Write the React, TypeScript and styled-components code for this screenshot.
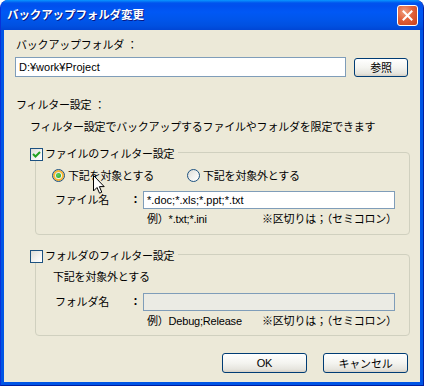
import styled, { createGlobalStyle } from 'styled-components'

const GlobalStyle = createGlobalStyle`
  html, body { margin: 0; padding: 0; background: #ffffff; }
  body {
    font-family: "Liberation Sans", "Noto Sans CJK JP", sans-serif;
    font-size: 11px;
    letter-spacing: -0.2px;
    color: #000;
  }
`

function App() {
  return (
    <>
      <GlobalStyle />
      <Window>
        <TitleBar>
          <Title>バックアップフォルダ変更</Title>
          <CloseButton>
            <svg width="11" height="11" viewBox="0 0 11 11">
              <path d="M1.5 1.5 L9.5 9.5 M9.5 1.5 L1.5 9.5" stroke="#fff" strokeWidth="2" strokeLinecap="square" />
            </svg>
          </CloseButton>
        </TitleBar>

        <Client>
          <Text $indent={12} $top={8}>バックアップフォルダ ：</Text>
          <PathRow>
            <TextBox $width={331} $height={20}>D:¥work¥Project</TextBox>
            <Button $width={54} $height={19}>参照</Button>
          </PathRow>

          <Text $indent={12} $top={21}>フィルター設定 ：</Text>
          <Text $indent={26} $top={8}>フィルター設定でバックアップするファイルやフォルダを限定できます</Text>

          <Group $top={13}>
            <GroupHeader>
              <CheckBox>
                <svg width="11" height="11" viewBox="0 0 11 11">
                  <path d="M2 5 L4.5 7.5 L9 3" stroke="#21A121" strokeWidth="2" fill="none" />
                </svg>
              </CheckBox>
              <span>ファイルのフィルター設定</span>
            </GroupHeader>
            <GroupBox $height={83} $pad={16}>
              <RadioRow>
                <RadioOption $width={135}>
                  <Radio $checked $hover />
                  <span>下記を対象とする</span>
                </RadioOption>
                <RadioOption>
                  <Radio />
                  <span>下記を対象外とする</span>
                </RadioOption>
              </RadioRow>
              <FieldRow $top={9}>
                <FieldLabel>ファイル名</FieldLabel>
                <Colon>：</Colon>
                <TextBox $width={252} $height={18}>*.doc;*.xls;*.ppt;*.txt</TextBox>
              </FieldRow>
              <HintRow>
                <HintExample>例）*.txt;*.ini</HintExample>
                <span>※区切りは；（セミコロン）</span>
              </HintRow>
            </GroupBox>
          </Group>

          <Group $top={14}>
            <GroupHeader>
              <CheckBox />
              <span>フォルダのフィルター設定</span>
            </GroupHeader>
            <GroupBox $height={82} $pad={15}>
              <Text $indent={1} $top={0}>下記を対象外とする</Text>
              <FieldRow $top={9}>
                <FieldLabel>フォルダ名</FieldLabel>
                <Colon>：</Colon>
                <TextBox $width={252} $height={18} $disabled />
              </FieldRow>
              <HintRow>
                <HintExample>例）Debug;Release</HintExample>
                <span>※区切りは；（セミコロン）</span>
              </HintRow>
            </GroupBox>
          </Group>

          <ButtonRow>
            <Button $width={85} $height={20}>OK</Button>
            <Button $width={85} $height={20}>キャンセル</Button>
          </ButtonRow>
        </Client>

        <Cursor width="12" height="19" viewBox="0 0 12 19">
          <path d="M0.5 0.5 L0.5 16 L4 12.5 L6.5 18.2 L8.8 17.2 L6.4 11.6 L11.2 11.6 Z" fill="#fff" stroke="#000" strokeWidth="1" />
        </Cursor>
      </Window>
    </>
  )
}

export default App

const Window = styled.div`
  position: relative;
  width: 424px;
  height: 386px;
  box-sizing: border-box;
  display: flex;
  flex-direction: column;
  background: #0055e5;
  border: 1px solid #0831d9;
  border-top: none;
  border-right-color: #001ea0;
  border-bottom-color: #001ea0;
  border-radius: 8px 8px 0 0;
  overflow: hidden;
`

const TitleBar = styled.div`
  height: 30px;
  flex: none;
  display: flex;
  align-items: center;
  justify-content: space-between;
  padding: 0 5px 0 6px;
  background: linear-gradient(to bottom, #0997ff 0px, #0053ee 3px, #0050ee 6px, #0058f5 12px, #0055ea 20px, #0050e0 26px, #0046d5 30px);
`

const Title = styled.div`
  color: #fff;
  font-weight: bold;
  font-size: 11.5px;
  letter-spacing: -0.1px;
  line-height: 14px;
  text-shadow: 1px 1px 0 #0a1883;
`

const CloseButton = styled.div`
  width: 21px;
  height: 21px;
  box-sizing: border-box;
  border: 1px solid #fff;
  border-radius: 3px;
  display: flex;
  align-items: center;
  justify-content: center;
  background: radial-gradient(circle at 35% 30%, #f0a080 0%, #e2613a 45%, #c8401a 100%);
`

const Client = styled.div`
  flex: 1;
  margin: 0 3px 3px 3px;
  background: #ece9d8;
  display: flex;
  flex-direction: column;
`

const Text = styled.div<{ $indent: number; $top: number }>`
  margin-left: ${p => p.$indent}px;
  margin-top: ${p => p.$top}px;
  line-height: 14px;
  white-space: nowrap;
`

const PathRow = styled.div`
  display: flex;
  align-items: center;
  gap: 8px;
  margin: 5px 0 0 11px;
`

const TextBox = styled.div<{ $width: number; $height: number; $disabled?: boolean }>`
  width: ${p => p.$width}px;
  height: ${p => p.$height}px;
  box-sizing: border-box;
  border: 1px solid #7f9db9;
  background: ${p => (p.$disabled ? '#ebebe4' : '#ffffff')};
  padding: 0 3px;
  display: flex;
  align-items: center;
  white-space: nowrap;
  overflow: hidden;
  letter-spacing: 0;
`

const Button = styled.div<{ $width: number; $height: number }>`
  width: ${p => p.$width}px;
  height: ${p => p.$height}px;
  box-sizing: border-box;
  border: 1px solid #003c74;
  border-radius: 3px;
  background: linear-gradient(to bottom, #ffffff 0%, #f4f4f0 50%, #e6e5de 85%, #d6d0c5 100%);
  display: flex;
  align-items: center;
  justify-content: center;
  white-space: nowrap;
`

const Group = styled.div<{ $top: number }>`
  margin-top: ${p => p.$top}px;
  display: flex;
  flex-direction: column;
`

const GroupHeader = styled.div`
  position: relative;
  z-index: 1;
  align-self: flex-start;
  display: flex;
  align-items: center;
  gap: 2px;
  margin-left: 26px;
  padding-right: 4px;
  height: 14px;
  line-height: 14px;
  background: #ece9d8;
  white-space: nowrap;
`

const CheckBox = styled.div`
  width: 13px;
  height: 13px;
  box-sizing: border-box;
  border: 1px solid #1c5180;
  background: linear-gradient(135deg, #dcdcd7 0%, #f4f4f2 60%, #ffffff 100%);
  display: flex;
  align-items: center;
  justify-content: center;
`

const GroupBox = styled.div<{ $height: number; $pad: number }>`
  margin: -9px 0 0 31px;
  width: 375px;
  height: ${p => p.$height}px;
  box-sizing: border-box;
  border: 1px solid #d0d0bf;
  border-radius: 4px;
  padding: ${p => p.$pad}px 0 0 16px;
  display: flex;
  flex-direction: column;
`

const RadioRow = styled.div`
  display: flex;
  align-items: center;
  height: 13px;
  line-height: 14px;
`

const RadioOption = styled.div<{ $width?: number }>`
  display: flex;
  align-items: center;
  gap: 3px;
  width: ${p => (p.$width ? `${p.$width}px` : 'auto')};
  white-space: nowrap;
`

const Radio = styled.div<{ $checked?: boolean; $hover?: boolean }>`
  width: 13px;
  height: 13px;
  box-sizing: border-box;
  border-radius: 50%;
  border: 1px solid #1c5180;
  background: linear-gradient(135deg, #dcdcd7 0%, #f4f4f2 60%, #ffffff 100%);
  box-shadow: ${p => (p.$hover ? 'inset 0 0 0 2px #f8b636' : 'none')};
  display: flex;
  align-items: center;
  justify-content: center;
  &::after {
    content: '';
    display: ${p => (p.$checked ? 'block' : 'none')};
    width: 5px;
    height: 5px;
    border-radius: 50%;
    background: radial-gradient(circle at 40% 40%, #5ed35e, #21a121);
  }
`

const FieldRow = styled.div<{ $top: number }>`
  display: flex;
  align-items: center;
  margin: ${p => p.$top}px 0 0 3px;
  line-height: 14px;
`

const FieldLabel = styled.div`
  width: 75px;
  white-space: nowrap;
`

const Colon = styled.div`
  width: 13px;
  font-weight: bold;
`

const HintRow = styled.div`
  display: flex;
  margin: 3px 0 0 95px;
  line-height: 14px;
  white-space: nowrap;
`

const HintExample = styled.span`
  width: 115px;
`

const ButtonRow = styled.div`
  display: flex;
  justify-content: flex-end;
  gap: 16px;
  margin: 17px 12px 0 0;
`

const Cursor = styled.svg`
  position: absolute;
  left: 92px;
  top: 175px;
`
